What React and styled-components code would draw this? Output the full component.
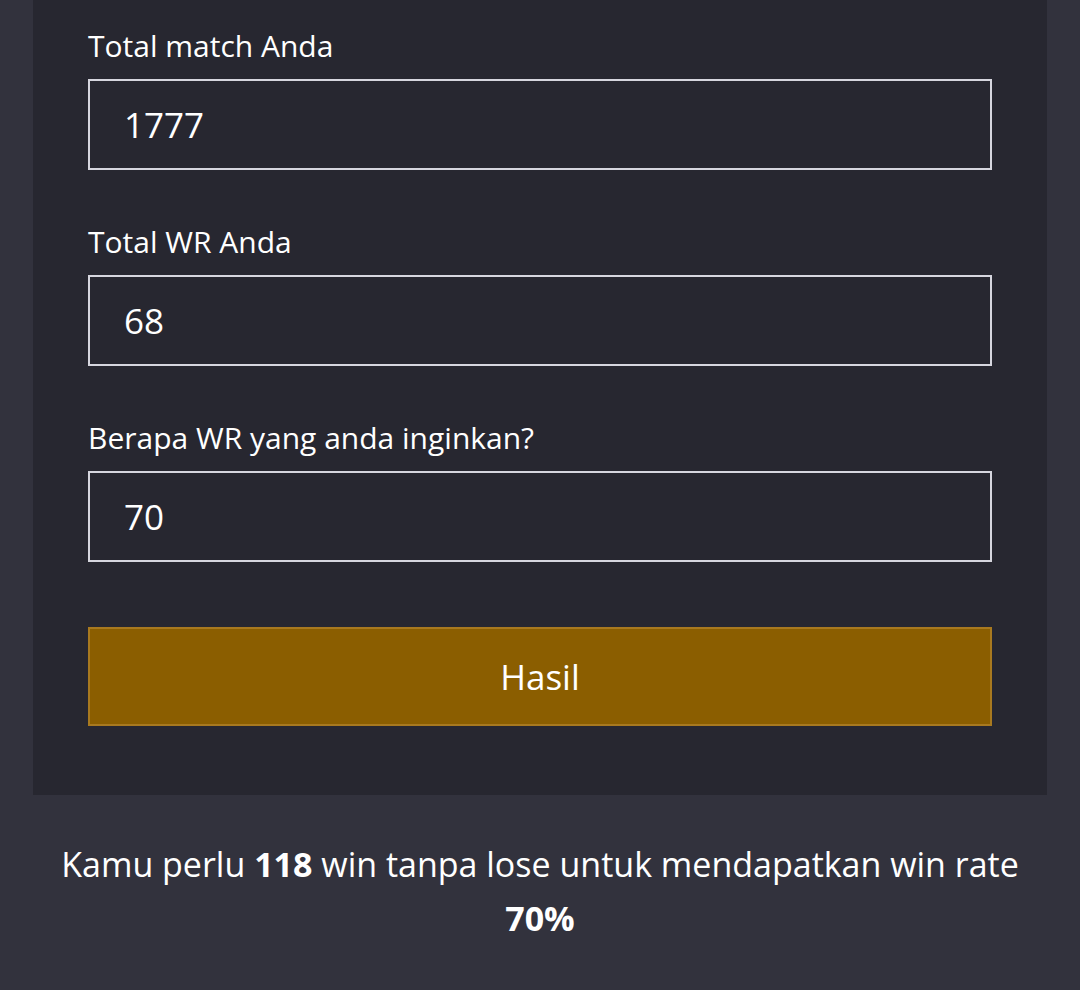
import React from "react";
import styled, { createGlobalStyle } from "styled-components";

const Global = createGlobalStyle`
  html, body {
    margin: 0;
    padding: 0;
    background: #32323d;
  }
  body {
    font-family: "Open Sans", "Noto Sans", sans-serif;
    color: #ffffff;
  }
`;

const Page = styled.div`
  width: 1080px;
  height: 990px;
  padding: 0 33px;
  box-sizing: border-box;
  overflow: hidden;
`;

const Panel = styled.div`
  background: #272730;
  padding: 26px 55px 69px;
  display: flex;
  flex-direction: column;
`;

const Field = styled.div`
  display: flex;
  flex-direction: column;
  margin-bottom: 52px;
`;

const Label = styled.label`
  font-size: 30px;
  line-height: 40px;
  margin-bottom: 13px;
`;

const Input = styled.input`
  height: 91px;
  box-sizing: border-box;
  background: #272730;
  border: 2px solid #d6d6de;
  color: #ffffff;
  font-family: inherit;
  font-size: 35px;
  padding: 0 34px;
  outline: none;
`;

const Button = styled.button`
  margin-top: 13px;
  height: 99px;
  background: #8b5e00;
  border: 2px solid #a8791f;
  color: #ffffff;
  font-family: inherit;
  font-size: 35px;
  cursor: pointer;
`;

const Result = styled.p`
  margin: 42px 0 0;
  padding: 0 20px;
  text-align: center;
  font-family: "Open Sans", "Noto Sans", sans-serif;
  font-size: 34px;
  line-height: 54px;
  b {
    font-weight: 700;
  }
`;

const fields = [
  { label: "Total match Anda", value: "1777" },
  { label: "Total WR Anda", value: "68" },
  { label: "Berapa WR yang anda inginkan?", value: "70" },
];

export default function App() {
  return (
    <Page>
      <Global />
      <Panel>
        {fields.map((f) => (
          <Field key={f.label}>
            <Label>{f.label}</Label>
            <Input defaultValue={f.value} />
          </Field>
        ))}
        <Button>Hasil</Button>
      </Panel>
      <Result>
        Kamu perlu <b>118</b> win tanpa lose untuk mendapatkan win rate <b>70%</b>
      </Result>
    </Page>
  );
}
